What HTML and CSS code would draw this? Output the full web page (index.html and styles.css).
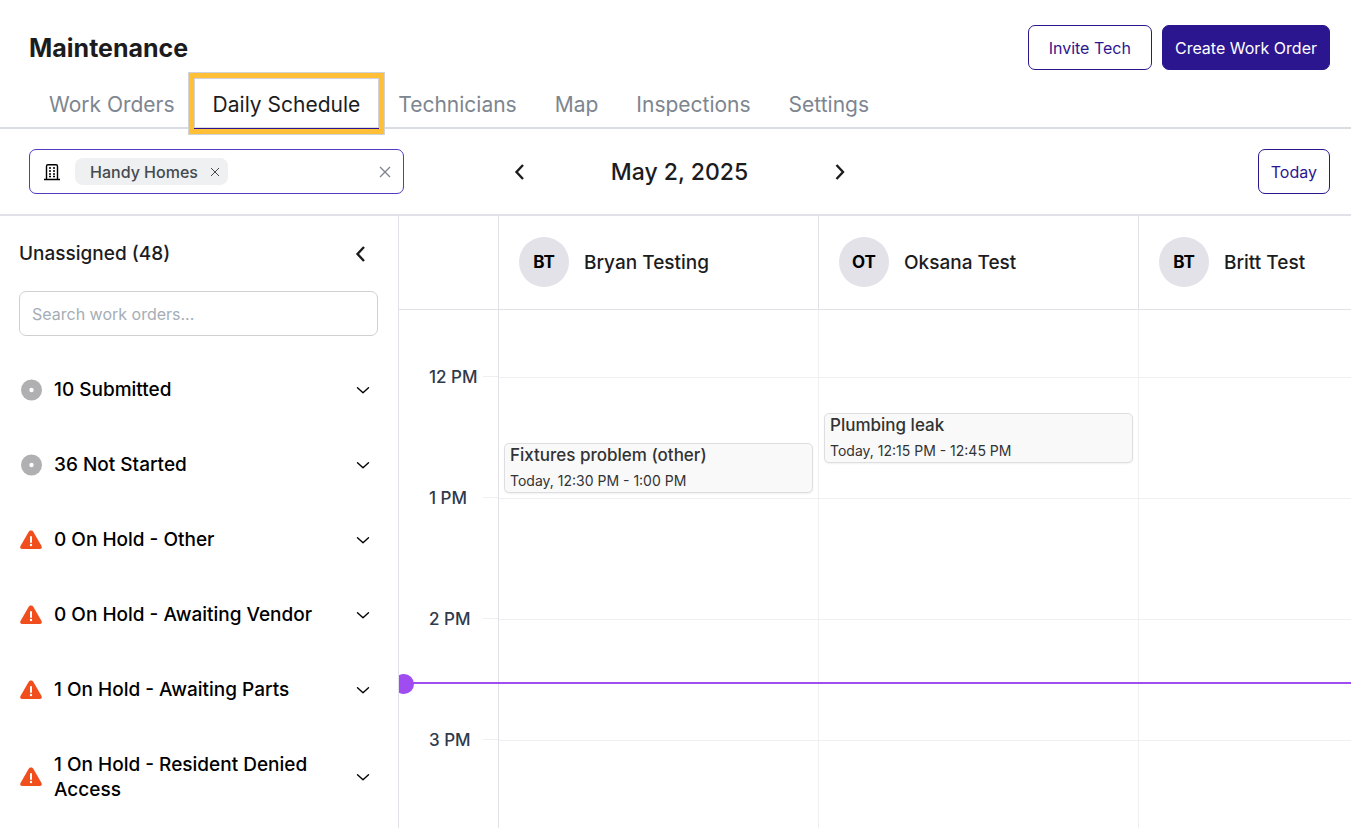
FILE: index.html
```html
<!DOCTYPE html>
<html lang="en">

<head>
    <meta charset="UTF-8">
    <meta name="viewport" content="width=device-width, initial-scale=1.0">
    <title>Maintenance - Daily Schedule</title>
    <link rel="stylesheet" href="styles.css">
</head>

<body>
    <!-- Shared icons -->
    <svg class="sprite" aria-hidden="true">
        <symbol id="icon-down" viewBox="0 0 14 14">
            <path d="M1.500 4.800L7 9.800l5.500-5" fill="none" stroke="currentColor" stroke-width="1.400" stroke-linecap="round" stroke-linejoin="round" />
        </symbol>
        <symbol id="icon-left" viewBox="0 0 20 20">
            <path d="M14 3L7.500 10l6.500 7" fill="none" stroke="currentColor" stroke-width="2.400" />
        </symbol>
        <symbol id="icon-right" viewBox="0 0 20 20">
            <path d="M6.500 3L13 10l-6.500 7" fill="none" stroke="currentColor" stroke-width="2.400" />
        </symbol>
        <symbol id="icon-dot" viewBox="0 0 24 24">
            <circle cx="12.5" cy="12" r="10.5" fill="#b0b0b2" />
            <circle cx="12.5" cy="12" r="2.2" fill="#fff" />
        </symbol>
        <symbol id="icon-alert" viewBox="0 0 24 24">
            <path d="M12 2.500c1 0 1.800.5 2.300 1.300l8.200 14.200c.9 1.600 0 3-1.700 3H3.200c-1.700 0-2.600-1.400-1.700-3L9.700 3.800c.5-.8 1.300-1.300 2.300-1.300z" fill="#f04e1d" />
            <path d="M12 9v5" stroke="#fff" stroke-width="2" stroke-linecap="round" />
            <circle cx="12" cy="17" r="1.200" fill="#fff" />
        </symbol>
    </svg>

    <header class="header">
        <h1>Maintenance</h1>
        <div class="actions">
            <button type="button" class="btn btn-wide">Invite Tech</button>
            <button type="button" class="btn btn-primary">Create Work Order</button>
        </div>
    </header>

    <nav class="tabs">
        <a href="#work-orders">Work Orders</a>
        <a href="#daily-schedule" class="active" aria-current="page">Daily Schedule</a>
        <a href="#technicians">Technicians</a>
        <a href="#map">Map</a>
        <a href="#inspections">Inspections</a>
        <a href="#settings">Settings</a>
    </nav>

    <div class="toolbar">
        <div class="property-select">
            <svg class="building" width="18" height="18" viewBox="0 0 18 18" aria-hidden="true">
                <path d="M3.500 16V3.200c0-.9.600-1.500 1.500-1.500h8c.9 0 1.500.6 1.500 1.500V16M1 16.500h16" fill="none" stroke="currentColor" stroke-width="1.400" />
                <path d="M6 5h2M10 5h2M6 8h2M10 8h2M6 11h2M10 11h2M6 13.500h2M10 13.500h2" stroke="currentColor" stroke-width="1.300" />
            </svg>
            <span class="chip">
                Handy Homes
                <button type="button" class="icon-btn" aria-label="Remove Handy Homes">
                    <svg width="10" height="10" viewBox="0 0 10 10"><path d="M1 1l8 8M9 1L1 9" stroke="currentColor" stroke-width="1" /></svg>
                </button>
            </span>
            <input type="text" aria-label="Properties">
            <button type="button" class="icon-btn clear" aria-label="Clear all">
                <svg width="12" height="12" viewBox="0 0 12 12"><path d="M1 1l10 10M11 1L1 11" stroke="currentColor" stroke-width="1.400" /></svg>
            </button>
        </div>
        <div class="date-nav">
            <button type="button" class="icon-btn" aria-label="Previous day"><svg width="20" height="20"><use href="#icon-left" /></svg></button>
            <h2>May 2, 2025</h2>
            <button type="button" class="icon-btn" aria-label="Next day"><svg width="20" height="20"><use href="#icon-right" /></svg></button>
        </div>
        <button type="button" class="btn today">Today</button>
    </div>

    <main class="board">
        <aside class="sidebar">
            <div class="sidebar-head">
                <h3>Unassigned (48)</h3>
                <button type="button" class="icon-btn" aria-label="Collapse"><svg width="20" height="20"><use href="#icon-left" /></svg></button>
            </div>
            <input type="search" class="search" placeholder="Search work orders..." aria-label="Search work orders">
            <div class="groups">
                <button type="button" class="group" aria-expanded="false">
                    <svg width="24" height="24"><use href="#icon-dot" /></svg>
                    <span>10 Submitted</span>
                    <svg width="14" height="14"><use href="#icon-down" /></svg>
                </button>
                <button type="button" class="group" aria-expanded="false">
                    <svg width="24" height="24"><use href="#icon-dot" /></svg>
                    <span>36 Not Started</span>
                    <svg width="14" height="14"><use href="#icon-down" /></svg>
                </button>
                <button type="button" class="group" aria-expanded="false">
                    <svg width="24" height="24"><use href="#icon-alert" /></svg>
                    <span>0 On Hold - Other</span>
                    <svg width="14" height="14"><use href="#icon-down" /></svg>
                </button>
                <button type="button" class="group" aria-expanded="false">
                    <svg width="24" height="24"><use href="#icon-alert" /></svg>
                    <span>0 On Hold - Awaiting Vendor</span>
                    <svg width="14" height="14"><use href="#icon-down" /></svg>
                </button>
                <button type="button" class="group" aria-expanded="false">
                    <svg width="24" height="24"><use href="#icon-alert" /></svg>
                    <span>1 On Hold - Awaiting Parts</span>
                    <svg width="14" height="14"><use href="#icon-down" /></svg>
                </button>
                <button type="button" class="group" aria-expanded="false">
                    <svg width="24" height="24"><use href="#icon-alert" /></svg>
                    <span>1 On Hold - Resident Denied Access</span>
                    <svg width="14" height="14"><use href="#icon-down" /></svg>
                </button>
            </div>
        </aside>

        <section class="schedule">
            <div class="tech-row">
                <div class="corner"></div>
                <div class="tech"><span class="avatar">BT</span>Bryan Testing</div>
                <div class="tech"><span class="avatar">OT</span>Oksana Test</div>
                <div class="tech"><span class="avatar">BT</span>Britt Test</div>
            </div>
            <div class="day">
                <div class="hours">
                    <div class="hour">12 PM</div>
                    <div class="hour">1 PM</div>
                    <div class="hour">2 PM</div>
                    <div class="hour">3 PM</div>
                </div>
                <!-- event top: 68px to the noon line, then 2px per minute, plus a 5px inset -->
                <div class="lane">
                    <div class="event" style="top: 133px">
                        <strong>Fixtures problem (other)</strong>
                        <span>Today, 12:30 PM - 1:00 PM</span>
                    </div>
                </div>
                <div class="lane">
                    <div class="event" style="top: 103px">
                        <strong>Plumbing leak</strong>
                        <span>Today, 12:15 PM - 12:45 PM</span>
                    </div>
                </div>
                <div class="lane"></div>
                <div class="now" style="top: 372px"></div>
            </div>
        </section>
    </main>
</body>

</html>
```
FILE: styles.css
```css
* {
    box-sizing: border-box;
}

body {
    margin: 0;
    height: 100vh;
    display: flex;
    flex-direction: column;
    overflow: hidden;
    font-family: Inter, "Liberation Sans", sans-serif;
    font-size: 16px;
    color: #1c1c1e;
    background: #fff;
}

h1, h2, h3 {
    margin: 0;
}

button, input {
    font-family: inherit;
    font-size: 16px;
}

.sprite {
    display: none;
}

svg {
    display: block;
    flex: none;
}

.header {
    display: flex;
    justify-content: space-between;
    align-items: center;
    padding: 25px 21px 0 29px;
}

h1 {
    font-size: 25px;
    font-weight: 700;
}

.actions {
    display: flex;
    gap: 10px;
}

/* Buttons */
.btn {
    height: 45px;
    padding: 0 12px;
    border: 1px solid #2c168f;
    border-radius: 7px;
    background: #fff;
    color: #2c168f;
    cursor: pointer;
}

.btn-wide {
    padding: 0 20px;
}

.btn-primary {
    background: #2c168f;
    color: #fff;
}

.icon-btn {
    display: flex;
    padding: 0;
    border: none;
    background: none;
    color: inherit;
    cursor: pointer;
}

/* Tabs */
.tabs {
    display: flex;
    padding: 12px 30px 0;
    border-bottom: 2px solid #d9dce1;
}

.tabs a {
    padding: 0 19px;
    font-size: 21px;
    line-height: 45px;
    color: #7d858f;
    text-decoration: none;
}

.tabs .active {
    position: relative;
    color: #1c1c1e;
}

/* Highlight frame drawn over the tab bar */
.tabs .active::after {
    content: "";
    position: absolute;
    inset: -9px -5px -7px;
    border: 5px solid #ffbf36;
    outline: 1px solid #d0d2d6;
    box-shadow: inset 0 -1px 0 #2c168f, inset 0 0 0 1px #d0d2d6;
}

/* Toolbar */
.toolbar {
    display: grid;
    grid-template-columns: 1fr auto 1fr;
    align-items: center;
    padding: 20px 21px 20px 29px;
    border-bottom: 2px solid #e1e1e7;
}

.property-select {
    display: flex;
    align-items: center;
    max-width: 375px;
    height: 45px;
    padding: 0 12px 0 13px;
    border: 1px solid #4f3cc0;
    border-radius: 7px;
}

.property-select input {
    flex: 1;
    min-width: 0;
    border: none;
    outline: none;
    background: none;
}

.building {
    color: #000;
}

.chip {
    display: flex;
    align-items: center;
    gap: 12px;
    height: 27px;
    margin-left: 14px;
    padding: 0 8px 0 15px;
    border-radius: 8px;
    background: #eff0f2;
    color: #44494e;
    font-weight: 500;
    white-space: nowrap;
}

.clear {
    color: #7d858f;
}

.date-nav {
    display: flex;
    justify-content: space-between;
    align-items: center;
    width: 342px;
}

h2 {
    font-size: 23px;
    font-weight: 500;
}

.today {
    justify-self: end;
}

.board {
    flex: 1;
    display: flex;
    min-height: 0;
}

/* Unassigned work orders */
.sidebar {
    flex: none;
    width: 399px;
    padding: 25px 20px 0 19px;
    border-right: 1px solid #e1e1e7;
    overflow: hidden;
}

.sidebar-head {
    display: flex;
    justify-content: space-between;
    align-items: center;
    height: 25px;
    padding-right: 8px;
}

h3 {
    font-size: 19px;
    font-weight: 500;
}

.search {
    display: block;
    width: 100%;
    height: 45px;
    margin: 25px 0 16px;
    padding: 0 12px;
    border: 1px solid #d0d0d3;
    border-radius: 7px;
}

.search::placeholder {
    color: #a5adb5;
}

.group {
    display: flex;
    align-items: center;
    width: 100%;
    padding: 25px 8px 25px 0;
    border: none;
    background: none;
    color: #000;
    font-size: 19px;
    font-weight: 500;
    line-height: 25px;
    text-align: left;
    cursor: pointer;
}

.group span {
    flex: 1;
    padding: 0 24px 0 11px;
}

/* Schedule */
.schedule {
    flex: 1;
    display: flex;
    flex-direction: column;
    min-width: 0;
    overflow: hidden;
}

.tech-row,
.day {
    display: grid;
    grid-template-columns: 100px repeat(3, 320px);
}

.tech-row {
    border-bottom: 1px solid #e1e1e7;
}

.corner,
.tech {
    border-right: 1px solid #e1e1e7;
}

.tech {
    display: flex;
    align-items: center;
    gap: 15px;
    height: 93px;
    padding: 0 20px 1px;
    font-size: 19px;
    font-weight: 500;
}

.avatar {
    display: flex;
    align-items: center;
    justify-content: center;
    width: 50px;
    height: 50px;
    border-radius: 50%;
    background: #e2e2e8;
    color: #000;
    font-size: 17px;
    font-weight: 700;
}

.day {
    flex: 1;
    position: relative;
    overflow: hidden;
}

.hours {
    padding: 6px 0 0 30px;
    border-right: 1px solid #e1e1e7;
}

.hour {
    display: flex;
    align-items: center;
    justify-content: space-between;
    height: 121px;
    font-size: 17px;
    font-weight: 500;
    color: #303a4b;
}

/* Tick next to each hour label */
.hour::after {
    content: "";
    width: 15px;
    height: 1px;
    background: #efeff1;
}

.lane {
    position: relative;
    border-right: 1px solid #f0f0f2;
    background: repeating-linear-gradient(#f0f0f2 0 1px, transparent 1px 121px) 0 67px no-repeat;
}

.event {
    position: absolute;
    left: 5px;
    right: 5px;
    display: flex;
    flex-direction: column;
    height: 50px;
    padding: 0 5px;
    border: 1px solid #dedee0;
    border-radius: 5px;
    background: #f9f9f9;
    box-shadow: 0 1px 2px rgba(0, 0, 0, 0.06);
    color: #333;
    line-height: 23px;
    white-space: nowrap;
}

.event strong {
    font-size: 17px;
    font-weight: 500;
}

.event span {
    font-size: 14px;
    line-height: 27px;
}

/* Current time marker */
.now {
    position: absolute;
    left: 0;
    right: 0;
    height: 2px;
    background: #9f4df0;
}

.now::before {
    content: "";
    position: absolute;
    left: -5px;
    top: -8px;
    width: 20px;
    height: 20px;
    border-radius: 50%;
    background: #9f4df0;
}
```
